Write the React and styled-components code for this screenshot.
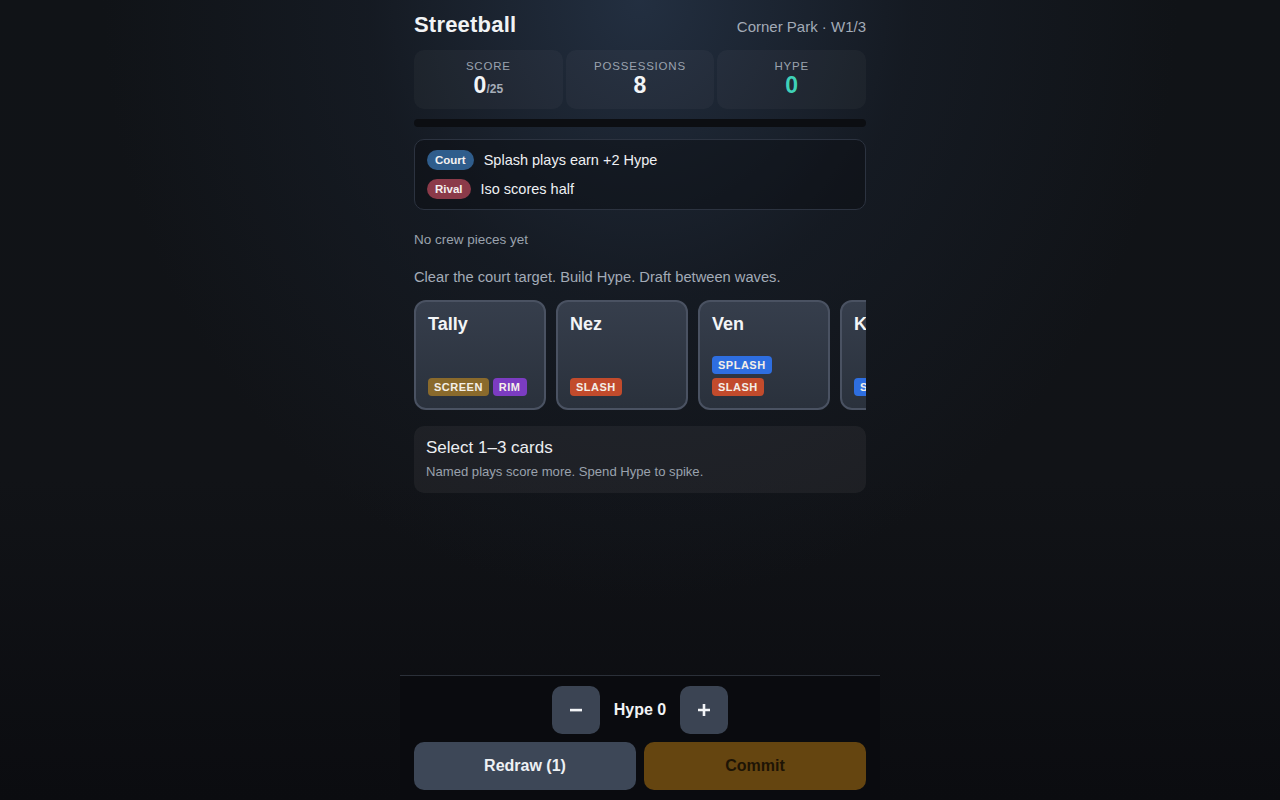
import React from 'react'
import styled, { createGlobalStyle } from 'styled-components'

const GlobalStyle = createGlobalStyle`
  html, body {
    margin: 0;
    height: 100%;
  }

  body {
    background:
      radial-gradient(ellipse 42% 75% at 50% 0%, rgba(38, 52, 72, 0.85) 0%, rgba(24, 31, 42, 0.6) 50%, rgba(17, 20, 25, 0) 100%),
      linear-gradient(180deg, #101317 0%, #111317 60%, #0b0c10 100%);
    color: #f1f3f5;
    font-family: "Liberation Sans", Arial, sans-serif;
    overflow: hidden;
  }
`

const Shell = styled.div`
  display: flex;
  flex-direction: column;
  height: 100vh;
  margin: 0 auto;
  width: 480px;
`

const Main = styled.main`
  box-sizing: border-box;
  display: flex;
  flex: 1;
  flex-direction: column;
  min-height: 0;
  padding: 12px 14px 0;
`

const Header = styled.header`
  align-items: center;
  display: flex;
  height: 26px;
  justify-content: space-between;

  h1 {
    font-size: 22px;
    font-weight: bold;
    letter-spacing: 0.2px;
    margin: 0;
  }

  span {
    color: #a3abb7;
    font-size: 15px;
    margin-top: 2px;
  }
`

const Stats = styled.div`
  display: grid;
  gap: 3px;
  grid-template-columns: repeat(3, 1fr);
  margin-top: 12px;
`

const Stat = styled.div`
  align-items: center;
  background: rgba(255, 255, 255, 0.03);
  border-radius: 10px;
  box-sizing: border-box;
  display: flex;
  flex-direction: column;
  height: 59px;
  justify-content: center;
  padding-bottom: 1px;

  small {
    color: #9aa2ae;
    font-size: 11.5px;
    letter-spacing: 0.8px;
    text-transform: uppercase;
  }
`

const StatValue = styled.div`
  color: ${p => p.accent || '#f3f5f7'};
  font-size: 23px;
  font-weight: bold;
  line-height: 26px;

  sub {
    color: #a6adb8;
    font-size: 12px;
    line-height: 1;
    vertical-align: baseline;
  }
`

const HypeBar = styled.div`
  background: #0c0e12;
  border-radius: 4px;
  height: 8px;
  margin-top: 10px;
  overflow: hidden;

  div {
    background: #3fd1b8;
    height: 100%;
  }
`

const Modifiers = styled.div`
  background: rgba(12, 14, 18, 0.45);
  border: 1px solid #2c3340;
  border-radius: 10px;
  display: flex;
  flex-direction: column;
  gap: 9px;
  margin-top: 12px;
  padding: 10px 12px 10px;
`

const ModRow = styled.div`
  align-items: center;
  display: flex;
  font-size: 14.5px;
  gap: 10px;
  color: #eef0f3;
`

const Pill = styled.span`
  background: ${p => p.color};
  border-radius: 10px;
  color: #f4f1f1;
  font-size: 11.5px;
  font-weight: bold;
  line-height: 20px;
  padding: 0 8px;
`

const Muted = styled.p`
  color: ${p => p.light ? '#a3abb7' : '#9aa2ad'};
  font-size: ${p => p.size}px;
  margin: ${p => p.top}px 0 0;
`

const Hand = styled.div`
  display: flex;
  gap: 10px;
  margin-top: 15px;
  overflow: hidden;
`

const Card = styled.div`
  background: linear-gradient(180deg, #363e4c 0%, #2a313c 100%);
  border: 2px solid #4a5262;
  border-radius: 12px;
  box-sizing: border-box;
  display: flex;
  flex: 0 0 132px;
  flex-direction: column;
  height: 110px;
  justify-content: space-between;
  padding: 12px 12px 12px;

  h3 {
    font-size: 18px;
    font-weight: bold;
    margin: 0;
    color: #f3f5f7;
  }
`

const Tags = styled.div`
  display: flex;
  flex-wrap: wrap;
  gap: 4px;
`

const tagColors = {
  SCREEN: '#8a6a2c',
  RIM: '#7c3cc2',
  SLASH: '#c24b2c',
  SPLASH: '#2e6ee0',
}

const Tag = styled.span`
  background: ${p => tagColors[p.kind]};
  border-radius: 4px;
  color: #f4efe8;
  font-size: 11px;
  font-weight: bold;
  letter-spacing: 0.5px;
  line-height: 18px;
  padding: 0 6px;
`

const Hint = styled.div`
  background: rgba(255, 255, 255, 0.05);
  border-radius: 10px;
  margin-top: 16px;
  padding: 12px 12px 14px;

  h4 {
    color: #eceef1;
    font-size: 17px;
    font-weight: normal;
    margin: 0;
  }

  p {
    color: #9aa2ad;
    font-size: 13.1px;
    margin: 6px 0 0;
  }
`

const Footer = styled.footer`
  background: #0a0b0f;
  border-top: 1px solid #2b3039;
  box-sizing: border-box;
  display: flex;
  flex-direction: column;
  gap: 8px;
  height: 125px;
  padding: 10px 14px;
`

const Stepper = styled.div`
  align-items: center;
  display: flex;
  gap: 14px;
  justify-content: center;

  strong {
    font-size: 16px;
  }
`

const StepButton = styled.button`
  align-items: center;
  background: #3b4453;
  border: none;
  border-radius: 10px;
  color: #f3f5f7;
  display: flex;
  height: 48px;
  justify-content: center;
  width: 48px;
`

const Actions = styled.div`
  display: grid;
  gap: 8px;
  grid-template-columns: 1fr 1fr;
`

const ActionButton = styled.button`
  background: ${p => p.primary ? '#654510' : '#3d4757'};
  border: none;
  border-radius: 10px;
  color: ${p => p.primary ? '#1e1405' : '#eef1f4'};
  font-family: inherit;
  font-size: 16px;
  font-weight: bold;
  height: 48px;
`

const hand = [
  { name: 'Tally', tags: ['SCREEN', 'RIM'] },
  { name: 'Nez', tags: ['SLASH'] },
  { name: 'Ven', tags: ['SPLASH', 'SLASH'] },
  { name: 'Kip', tags: ['SPLASH'] },
]

const App = () => (
  <>
    <GlobalStyle />
    <Shell>
      <Main>
        <Header>
          <h1>Streetball</h1>
          <span>Corner Park · W1/3</span>
        </Header>

        <Stats>
          <Stat>
            <small>Score</small>
            <StatValue>0<sub>/25</sub></StatValue>
          </Stat>
          <Stat>
            <small>Possessions</small>
            <StatValue>8</StatValue>
          </Stat>
          <Stat>
            <small>Hype</small>
            <StatValue accent="#3fd1b8">0</StatValue>
          </Stat>
        </Stats>

        <HypeBar><div style={{ width: '0%' }} /></HypeBar>

        <Modifiers>
          <ModRow><Pill color="#2f5d8c">Court</Pill>Splash plays earn +2 Hype</ModRow>
          <ModRow><Pill color="#8b3a49">Rival</Pill>Iso scores half</ModRow>
        </Modifiers>

        <Muted size={13.5} top={22}>No crew pieces yet</Muted>
        <Muted size={14.7} top={22} light>Clear the court target. Build Hype. Draft between waves.</Muted>

        <Hand>
          {hand.map(card => (
            <Card key={card.name}>
              <h3>{card.name}</h3>
              <Tags>
                {card.tags.map(t => <Tag key={t} kind={t}>{t}</Tag>)}
              </Tags>
            </Card>
          ))}
        </Hand>

        <Hint>
          <h4>Select 1–3 cards</h4>
          <p>Named plays score more. Spend Hype to spike.</p>
        </Hint>
      </Main>

      <Footer>
        <Stepper>
          <StepButton aria-label="less hype">
            <svg width="14" height="14" viewBox="0 0 14 14"><rect x="1" y="5.8" width="12" height="2.6" fill="currentColor" /></svg>
          </StepButton>
          <strong>Hype 0</strong>
          <StepButton aria-label="more hype">
            <svg width="14" height="14" viewBox="0 0 14 14"><path d="M1 5.7h12v2.6H1zM5.7 1h2.6v12H5.7z" fill="currentColor" /></svg>
          </StepButton>
        </Stepper>
        <Actions>
          <ActionButton>Redraw (1)</ActionButton>
          <ActionButton primary>Commit</ActionButton>
        </Actions>
      </Footer>
    </Shell>
  </>
)

export default App
